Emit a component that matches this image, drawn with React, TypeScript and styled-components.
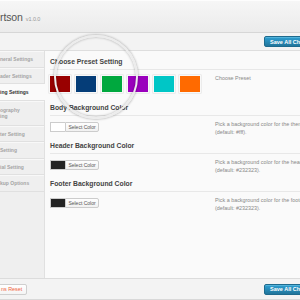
import styled, { createGlobalStyle } from "styled-components";

const GlobalStyle = createGlobalStyle`
  html, body {
    margin: 0;
    padding: 0;
    background: #fafafa;
  }
  body {
    font-family: "Liberation Sans", Arial, sans-serif;
  }
`;

const Page = styled.div`
  position: relative;
  width: 300px;
  height: 300px;
  overflow: hidden;
  display: flex;
  flex-direction: column;
  background: #fafafa;
`;

const Header = styled.header`
  height: 32px;
  flex-shrink: 0;
  display: flex;
  align-items: center;
  background: linear-gradient(#f6f6f6, #ebebeb);
  border-top: 1px solid #fdfdfd;
  border-bottom: 1px solid #d6d6d6;
  box-sizing: border-box;
  height: 33px;
`;
const Title = styled.h1`
  margin: 0;
  font-size: 10.5px;
  font-weight: normal;
  color: #555;
  letter-spacing: -0.1px;
`;
const Version = styled.span`
  margin-left: 3px;
  font-size: 5.5px;
  color: #999;
`;

const Toolbar = styled.div`
  height: 17px;
  flex-shrink: 0;
  display: flex;
  align-items: center;
  justify-content: flex-end;
  background: #f3f3f3;
  border-bottom: 1px solid #dedede;
`;

const SaveButton = styled.button`
  height: 11px;
  margin-right: -22px;
  padding: 0 5px;
  font-family: inherit;
  font-size: 5.5px;
  font-weight: bold;
  color: #fff;
  white-space: nowrap;
  background: linear-gradient(#2e9fd2, #21759b);
  border: 1px solid #1e6a8d;
  border-radius: 2px;
  box-shadow: inset 0 1px 0 rgba(120, 200, 230, 0.5);
  cursor: pointer;
`;

const Main = styled.div`
  flex: 1;
  display: flex;
  min-height: 0;
`;

const Sidebar = styled.nav`
  width: 44px;
  flex-shrink: 0;
  background: #efefef;
  border-right: 1px solid #e0e0e0;
`;

const NavItem = styled.div<{ $active?: boolean; $tall?: boolean }>`
  height: ${(p) => (p.$tall ? "25px" : "16.5px")};
  box-sizing: border-box;
  display: flex;
  flex-direction: column;
  justify-content: center;
  white-space: nowrap;
  font-size: 5px;
  line-height: 6px;
  font-weight: bold;
  color: ${(p) => (p.$active ? "#333" : "#a5a5a5")};
  background: ${(p) => (p.$active ? "#fafafa" : "transparent")};
  border-bottom: 1px solid #e0e0e0;
  border-top: 1px solid ${(p) => (p.$active ? "#fafafa" : "#f8f8f8")};
  margin-right: ${(p) => (p.$active ? "-1px" : "0")};
`;

const Content = styled.section`
  flex: 1;
  padding: 7px 0 0 5px;
  background: #fafafa;
`;

const SectionTitle = styled.h3`
  margin: 0 0 2.5px;
  font-size: 6.8px;
  line-height: 8px;
  font-weight: bold;
  color: #444;
  white-space: nowrap;
`;

const Row = styled.div`
  display: grid;
  grid-template-columns: 165px 1fr;
  border-top: 1px solid #e8e8e8;
  padding: 6px 0 6.5px;
`;

const Swatches = styled.div`
  display: flex;
  gap: 6px;
  margin-bottom: 6px;
`;

const Swatch = styled.div<{ $color: string }>`
  width: 20px;
  height: 16px;
  background: ${(p) => p.$color};
  box-shadow: 0 0 0 1px rgba(255, 255, 255, 0.8), 0 0 0 1.5px #ddd;
`;

const Picker = styled.div`
  display: flex;
  height: 10px;
`;

const PickerSwatch = styled.div<{ $color: string }>`
  width: 15px;
  height: 10px;
  box-sizing: border-box;
  background: ${(p) => p.$color};
  border: 1px solid #ccc;
  border-right: none;
`;

const PickerButton = styled.button`
  width: 34px;
  height: 10px;
  padding: 0;
  font-family: inherit;
  font-size: 5px;
  color: #555;
  background: linear-gradient(#fefefe, #f1f1f1);
  border: 1px solid #ccc;
  border-radius: 0 2px 2px 0;
  white-space: nowrap;
`;

const Desc = styled.div<{ $offset?: number }>`
  margin-top: ${(p) => p.$offset ?? 0}px;
  font-size: 5.4px;
  line-height: 8px;
  color: #888;
  white-space: nowrap;
`;

const Footer = styled.footer`
  height: 22px;
  flex-shrink: 0;
  box-sizing: border-box;
  display: flex;
  align-items: center;
  justify-content: space-between;
  background: #f3f3f3;
  border-top: 1px solid #dcdcdc;
  border-bottom: 1px solid #d8d8d8;
`;

const ResetButton = styled.button`
  height: 11px;
  margin-left: -4px;
  padding: 0 4px;
  font-family: inherit;
  font-size: 5.4px;
  color: #f0643c;
  background: linear-gradient(#fff, #f4f4f4);
  border: 1px solid #cfcfcf;
  border-radius: 2px;
  white-space: nowrap;
`;

const Magnifier = styled.div`
  position: absolute;
  left: 54px;
  top: 35px;
  width: 84px;
  height: 84px;
  box-sizing: border-box;
  border-radius: 50%;
  border: 2px solid #ececec;
  box-shadow: 0 0 2px 1px rgba(0, 0, 0, 0.18),
    inset 0 0 2px 1px rgba(0, 0, 0, 0.15);
  pointer-events: none;
`;

const presets = ["#990000", "#053d78", "#00a83e", "#9a00bd", "#00c6c6", "#ff6a00"];

const nav = [
  { label: ["neral Settings"] },
  { label: ["ader Settings"] },
  { label: ["ing Settings"], active: true },
  { label: ["ography", "ing"], tall: true },
  { label: ["ter Setting"] },
  { label: ["Setting"] },
  { label: ["ial Setting"] },
  { label: ["kup Options"] },
];

const colorRows = [
  { title: "Body Background Color", swatch: "#ffffff", target: "theme body", def: "#fff" },
  { title: "Header Background Color", swatch: "#232323", target: "header", def: "#232323" },
  { title: "Footer Background Color", swatch: "#232323", target: "footer", def: "#232323" },
];

function App() {
  return (
    <>
      <GlobalStyle />
      <Page>
        <Header>
          <Title>
            rtson<Version>v1.0.0</Version>
          </Title>
        </Header>
        <Toolbar>
          <SaveButton>Save All Changes</SaveButton>
        </Toolbar>
        <Main>
          <Sidebar>
            {nav.map((item, i) => (
              <NavItem key={i} $active={item.active} $tall={item.tall}>
                {item.label.map((l) => (
                  <span key={l}>{l}</span>
                ))}
              </NavItem>
            ))}
          </Sidebar>
          <Content>
            <SectionTitle>Choose Preset Setting</SectionTitle>
            <Row>
              <Swatches>
                {presets.map((c) => (
                  <Swatch key={c} $color={c} />
                ))}
              </Swatches>
              <Desc $offset={-2}>Choose Preset</Desc>
            </Row>
            {colorRows.map((r) => (
              <div key={r.title}>
                <SectionTitle>{r.title}</SectionTitle>
                <Row>
                  <Picker>
                    <PickerSwatch $color={r.swatch} />
                    <PickerButton>Select Color</PickerButton>
                  </Picker>
                  <Desc $offset={-2}>
                    Pick a background color for the {r.target}
                    <br />
                    (default: {r.def}).
                  </Desc>
                </Row>
              </div>
            ))}
          </Content>
        </Main>
        <Footer>
          <ResetButton>ns Reset</ResetButton>
          <SaveButton>Save All Changes</SaveButton>
        </Footer>
        <Magnifier />
      </Page>
    </>
  );
}

export default App;
